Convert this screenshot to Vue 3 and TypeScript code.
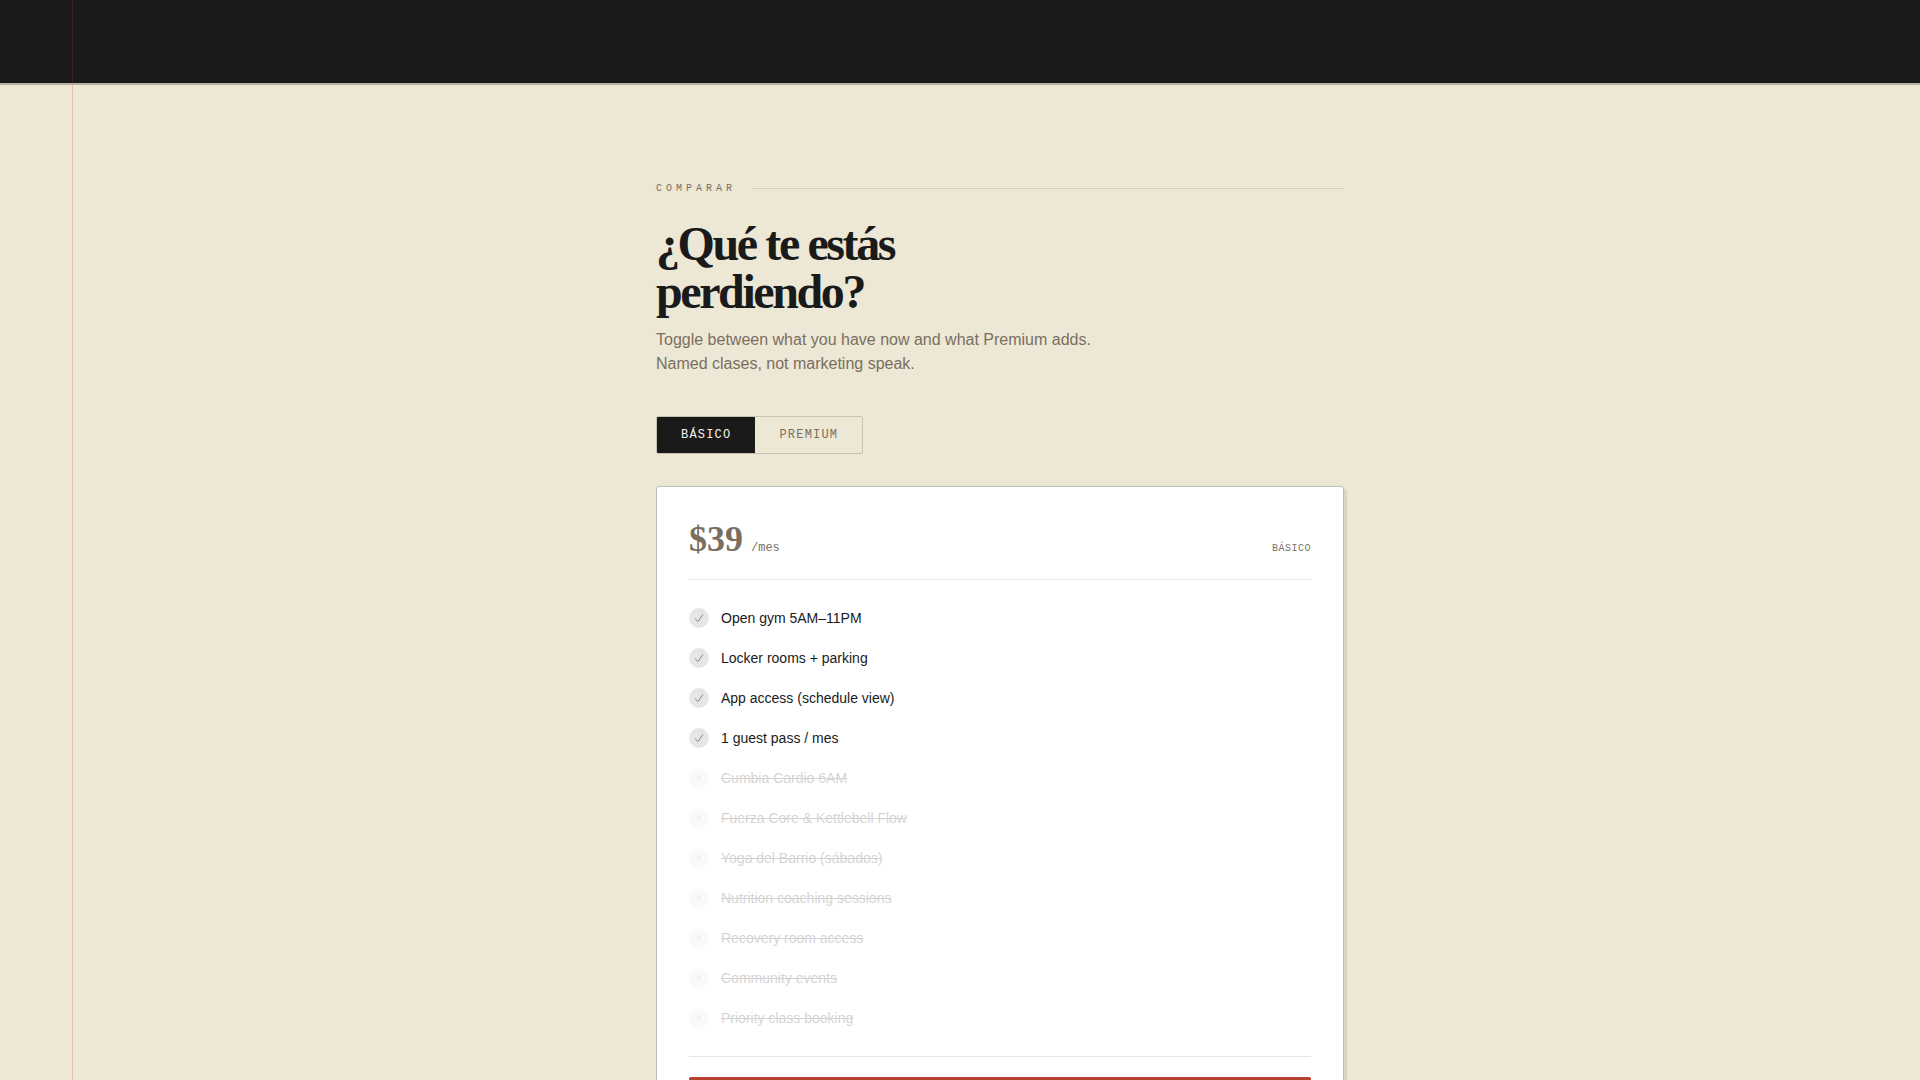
<script setup lang="ts">
import { computed, ref } from 'vue'

type Plan = 'basico' | 'premium'

interface Feature {
  label: string
  basic: boolean
}

const plan = ref<Plan>('basico')

const tabs: { id: Plan; label: string }[] = [
  { id: 'basico', label: 'Básico' },
  { id: 'premium', label: 'Premium' },
]

const features: Feature[] = [
  { label: 'Open gym 5AM–11PM', basic: true },
  { label: 'Locker rooms + parking', basic: true },
  { label: 'App access (schedule view)', basic: true },
  { label: '1 guest pass / mes', basic: true },
  { label: 'Cumbia Cardio 6AM', basic: false },
  { label: 'Fuerza Core & Kettlebell Flow', basic: false },
  { label: 'Yoga del Barrio (sábados)', basic: false },
  { label: 'Nutrition coaching sessions', basic: false },
  { label: 'Recovery room access', basic: false },
  { label: 'Community events', basic: false },
  { label: 'Priority class booking', basic: false },
]

const planLabel = computed(() => tabs.find((t) => t.id === plan.value)?.label ?? '')
const isIncluded = (f: Feature) => f.basic || plan.value === 'premium'
</script>

<template>
  <div class="page">
    <header class="band"></header>
    <div class="margin-rule" aria-hidden="true"></div>

    <main class="content">
      <section class="compare">
        <div class="eyebrow"><span>Comparar</span></div>
        <h1 class="title">¿Qué te estás<br />perdiendo?</h1>
        <p class="lead">
          Toggle between what you have now and what Premium adds.<br />
          Named clases, not marketing speak.
        </p>

        <div class="toggle">
          <button
            v-for="tab in tabs"
            :key="tab.id"
            type="button"
            class="toggle-button"
            :class="{ active: plan === tab.id }"
            :aria-pressed="plan === tab.id"
            @click="plan = tab.id"
          >
            {{ tab.label }}
          </button>
        </div>

        <article class="card">
          <div class="price-row">
            <span class="price">$39</span>
            <span class="period">/mes</span>
            <span class="plan-name">{{ planLabel }}</span>
          </div>

          <ul class="features">
            <li
              v-for="feature in features"
              :key="feature.label"
              class="feature"
              :class="{ missing: !isIncluded(feature) }"
            >
              <span class="mark">
                <svg v-if="isIncluded(feature)" viewBox="0 0 10 10" width="10" height="10" aria-hidden="true">
                  <path d="M1 5.6 3.8 8.6 9 1.4" />
                </svg>
                <svg v-else viewBox="0 0 10 10" width="10" height="10" aria-hidden="true">
                  <path d="M2.5 2.5 7.5 7.5M7.5 2.5 2.5 7.5" />
                </svg>
              </span>
              <span class="feature-label">{{ feature.label }}</span>
            </li>
          </ul>

          <div class="card-footer">
            <button type="button" class="cta" aria-label="Premium" @click="plan = 'premium'"></button>
          </div>
        </article>
      </section>
    </main>
  </div>
</template>

<style>
body {
  background: #ede7d6;
}
</style>

<style scoped>
.page {
  --ink: #1a1a1a;
  --muted: #7a6f5f;
  --paper: #ede7d6;
  --mono: 'Liberation Mono', monospace;
  height: 100vh;
  overflow: hidden;
  box-sizing: border-box;
  position: relative;
  background: var(--paper);
  color: var(--ink);
  font-family: 'Liberation Sans', sans-serif;
}

.band {
  height: 83px;
  background: var(--ink);
  border-bottom: 2px solid #b8b2a4;
}

.margin-rule {
  position: absolute;
  top: 0;
  bottom: 0;
  left: 72px;
  width: 1px;
  background: rgba(184, 48, 48, 0.22);
}

.content {
  padding: 96px 0 96px 80px;
}

.compare {
  max-width: 688px;
  margin: 0 auto;
}

.eyebrow {
  display: flex;
  align-items: center;
  gap: 16px;
  color: var(--muted);
  font: 10px/15px var(--mono);
  letter-spacing: 4px;
  text-transform: uppercase;
}

.eyebrow::after {
  content: '';
  flex: 1;
  height: 1px;
  background: #d3cdbd;
}

.title {
  margin: 24px 0 12px;
  font: bold 48px/48px 'Liberation Serif', serif;
  letter-spacing: -0.05em;
}

.lead {
  margin: 0 0 40px;
  color: var(--muted);
  font-size: 16px;
  line-height: 24px;
}

.toggle {
  display: inline-flex;
  border: 1px solid #c8c2b2;
  border-radius: 2px;
  overflow: hidden;
  vertical-align: top;
}

.toggle-button {
  padding: 10px 24px;
  border: 0;
  background: transparent;
  color: var(--muted);
  font: 12px/16px var(--mono);
  letter-spacing: 0.1em;
  text-transform: uppercase;
  cursor: pointer;
}

.toggle-button.active {
  background: var(--ink);
  color: #f5f2ea;
}

.card {
  margin-top: 32px;
  padding: 32px;
  border: 1px solid #bdbeb8;
  border-radius: 3px;
  background: #fff;
  box-shadow: 3px 3px 1px rgba(26, 26, 26, 0.09);
}

.price-row {
  display: flex;
  align-items: baseline;
  gap: 8px;
  padding-bottom: 20px;
  border-bottom: 1px solid #e6e6e6;
  color: var(--muted);
  font: 12px/16px var(--mono);
}

.price {
  font: bold 36px/40px 'Liberation Serif', serif;
}

.plan-name {
  margin-left: auto;
  font-size: 10px;
  letter-spacing: 0.05em;
  text-transform: uppercase;
}

.features {
  display: flex;
  flex-direction: column;
  gap: 20px;
  margin: 0;
  padding: 28px 0;
  list-style: none;
}

.feature {
  display: flex;
  align-items: center;
  gap: 12px;
  font-size: 14px;
  line-height: 20px;
}

.mark {
  display: grid;
  place-items: center;
  width: 20px;
  height: 20px;
  border-radius: 50%;
  background: #e6e6e6;
}

.mark path {
  fill: none;
  stroke: #858585;
  stroke-width: 1;
}

.missing {
  opacity: 0.19;
}

.missing .feature-label {
  text-decoration: line-through;
}

.card-footer {
  padding-top: 20px;
  border-top: 1px solid #e6e6e6;
}

.cta {
  display: block;
  width: 100%;
  height: 48px;
  border: 0;
  border-radius: 2px;
  background: #b8402e;
  cursor: pointer;
}
</style>
